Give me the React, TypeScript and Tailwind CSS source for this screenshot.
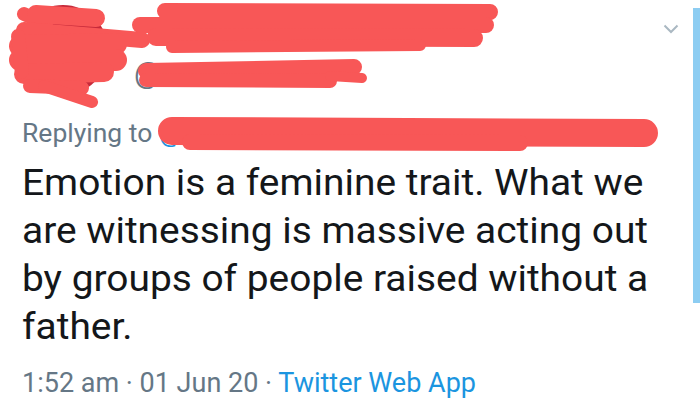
import React from "react";

const RED = "#f85757";

function Scribbles() {
  return (
    <svg className="absolute left-0 top-0" width="700" height="160" viewBox="0 0 700 160">
      <circle cx="63" cy="50" r="45" fill="#c62a3a" />
      <path d="M134 35 L138 28 L142 35 Z" fill="#111" />
      <rect x="276" y="38" width="3" height="6" fill="#111" />
      <g stroke={RED} strokeLinecap="round" fill="none">
        {/* avatar blob */}
        <path d="M24 14 L46 24" strokeWidth="14" />
        <path d="M36 14 L96 18" strokeWidth="18" />
        <path d="M24 30 L142 40" strokeWidth="16" />
        <path d="M20 46 L116 44" strokeWidth="22" />
        <path d="M20 60 L116 60" strokeWidth="22" />
        <path d="M24 74 L104 72" strokeWidth="20" />
        <path d="M30 86 L82 88" strokeWidth="14" />
        <path d="M44 86 L92 102" strokeWidth="12" />
        <path d="M18 36 L22 72" strokeWidth="14" />
        {/* name */}
        <path d="M165 11 L490 12" strokeWidth="16" />
        <path d="M140 25 L486 25" strokeWidth="16" />
        <path d="M156 37 L474 38" strokeWidth="18" />
        <path d="M172 47 L420 45" strokeWidth="12" />
        {/* handle */}
        <path d="M146 71 L354 67" strokeWidth="16" />
        <path d="M146 80 L330 81" strokeWidth="14" />
        <path d="M330 76 L362 78" strokeWidth="10" />
        {/* replying */}
        <path d="M172 131 L644 133" strokeWidth="28" />
        <path d="M190 142 L520 143" strokeWidth="16" />
      </g>
    </svg>
  );
}

export default function App() {
  return (
    <div
      className="relative flex w-[700px] h-[417px] bg-white overflow-hidden"
      style={{ fontFamily: "Roboto, 'Liberation Sans', sans-serif" }}
    >
      <div className="flex-1 flex flex-col pl-[22px]">
        <div className="relative h-[118px]">
          <div className="absolute left-[112px] top-[50px] text-[30px] text-[#657786]">@</div>
          <svg className="absolute left-[641px] top-[24px]" width="16" height="10" viewBox="0 0 16 10">
            <path d="M1.5 1.5 L8 8 L14.5 1.5" stroke="#aab8c2" strokeWidth="2" fill="none" />
          </svg>
        </div>
        <div className="text-[25px] leading-[32px] text-[#657786] origin-left scale-x-[1.06] whitespace-nowrap">
          Replying to <span className="text-[#1b95e0]">@</span>
        </div>
        <div className="mt-[9px] text-[36px] leading-[48px] text-[#14171a] origin-left scale-x-[1.08] whitespace-nowrap">
          Emotion is a feminine trait. What we<br />
          are witnessing is massive acting out<br />
          by groups of people raised without a<br />
          father.
        </div>
        <div className="mt-[16px] text-[27px] leading-[32px] text-[#657786] whitespace-nowrap">
          1:52 am · 01 Jun 20 · <span className="text-[#1b95e0]">Twitter Web App</span>
        </div>
      </div>
      <div className="w-[7px] mt-[8px] h-[295px] bg-[#8dcdf2]" />
      <Scribbles />
    </div>
  );
}
